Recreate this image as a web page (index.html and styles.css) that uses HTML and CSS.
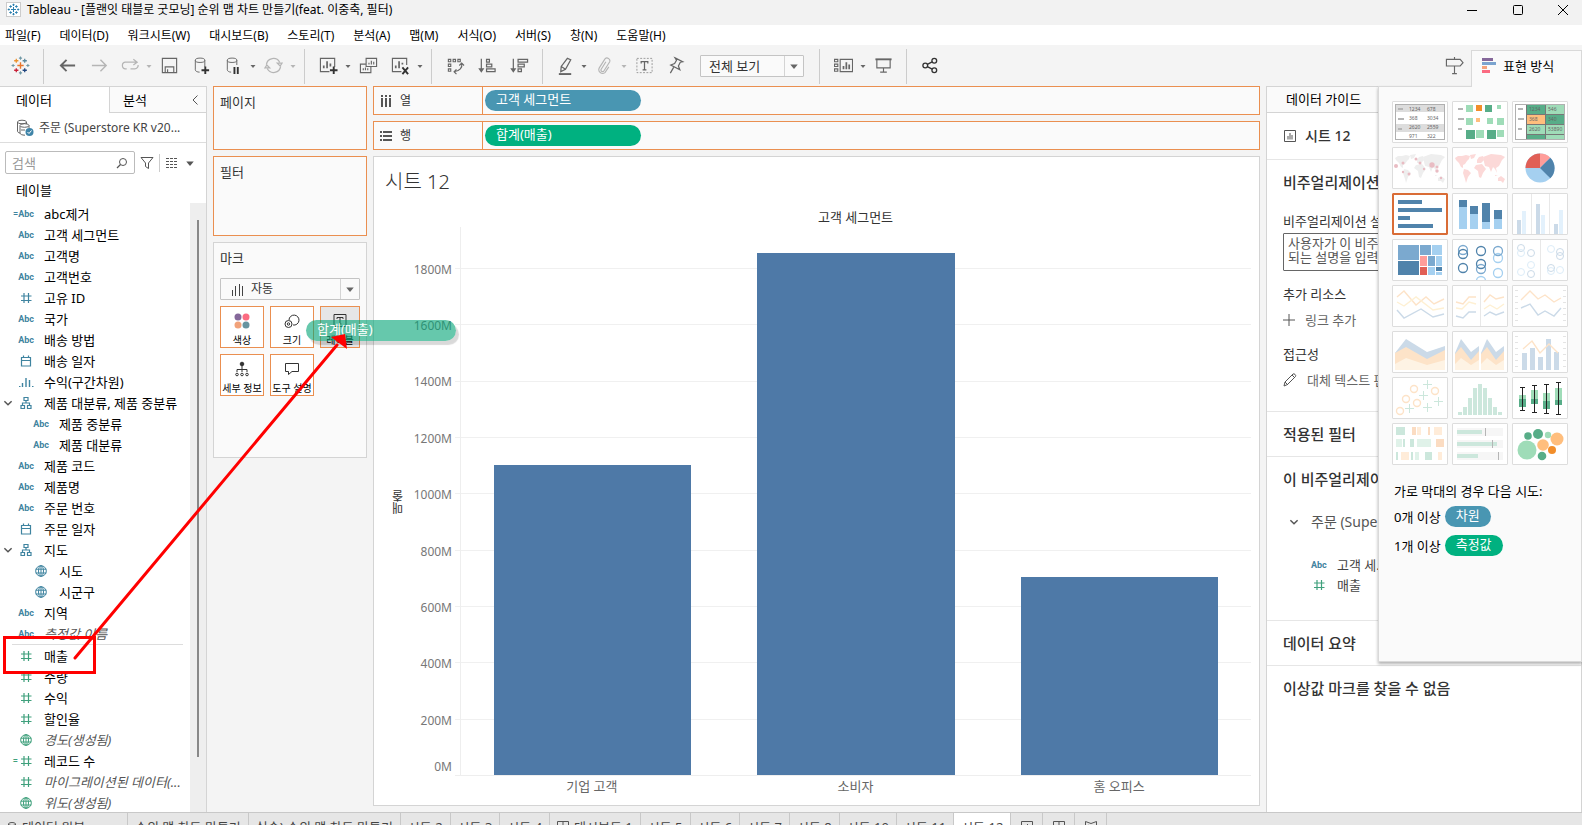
FILE: index.html
```html
<!DOCTYPE html>
<html lang="ko">
<head>
    <meta charset="UTF-8">
    <meta name="viewport" content="width=device-width, initial-scale=1.0">
    <title>Tableau - [플랜잇 태블로 굿모닝] 순위 맵 차트 만들기(feat. 이중축, 필터)</title>
    <link rel="stylesheet" href="styles.css">
</head>
<body>
    <!-- Shared icons -->
    <svg class="sprite" aria-hidden="true">
        <symbol id="i-hash" viewBox="0 0 16 16"><path d="M6 3v10M10.500 3v10M3 6h10.500M3 10.500h10.500" fill="none" stroke="currentColor" stroke-width="1.200"/></symbol>
        <symbol id="i-globe" viewBox="0 0 16 16"><g fill="none" stroke="currentColor"><circle cx="8" cy="8" r="5.300"/><ellipse cx="8" cy="8" rx="2.500" ry="5.300"/><path d="M2.700 6.200h10.600M2.700 10h10.600M8 2.700v10.600"/></g></symbol>
        <symbol id="i-date" viewBox="0 0 16 16"><path d="M3.500 4.500h9v8.500h-9zM3.500 7.500h9M5.500 2.500v2M10.500 2.500v2" fill="none" stroke="currentColor" stroke-width="1.200"/></symbol>
        <symbol id="i-hier" viewBox="0 0 16 16"><path d="M6 2.500h4v3H6zM3 10.500h3.500v3H3zM9.500 10.500H13v3H9.500zM8 5.500V8M4.500 10.500V8h7v2.500" fill="none" stroke="currentColor" stroke-width="1.200"/></symbol>
        <symbol id="i-bins" viewBox="0 0 16 16"><path d="M4.500 13V9M8 13V4M11.500 13V6" stroke="currentColor" stroke-width="1.400"/><path d="M1 12.500h1.500M14 12.500h1.500" stroke="currentColor"/></symbol>
        <symbol id="i-caret" viewBox="0 0 8 8"><path d="M1.500 3h5L4 6z" fill="currentColor"/></symbol>
        <symbol id="i-down" viewBox="0 0 10 10"><path d="M2 3.500l3 3 3-3" fill="none" stroke="currentColor" stroke-width="1.200"/></symbol>
        <symbol id="i-logo" viewBox="0 0 18 18">
            <path d="M9 6v6M6 9h6" stroke="#e8762c" stroke-width="1.300"/>
            <path d="M5 2.500v4M3 4.500h4" stroke="#eb912c" stroke-width="1.200"/>
            <path d="M13 2.500v4M11 4.500h4" stroke="#59879b" stroke-width="1.200"/>
            <path d="M5 11.500v4M3 13.500h4" stroke="#c72037" stroke-width="1.200"/>
            <path d="M13 11.500v4M11 13.500h4" stroke="#1f447e" stroke-width="1.200"/>
            <path d="M9 .5v3M7.500 2h3M9 14.500v3M7.500 16h3M2 7.500v3M.5 9h3M16 7.500v3M14.500 9h3" stroke="#7099a6"/>
        </symbol>
        <symbol id="i-logo-blue" viewBox="0 0 18 18">
            <path d="M9 5.500v7M5.500 9h7M5 3v3.500M3.200 4.800h3.600M13 3v3.500M11.200 4.800h3.600M5 11.500V15M3.200 13.200h3.600M13 11.500V15M11.200 13.200h3.600M9 1v3M7.500 2.500h3M9 14v3M7.500 15.500h3M2.500 7.500v3M1 9h3M15.500 7.500v3M14 9h3" stroke="#2b7fae" stroke-width="1.400"/>
        </symbol>
        <symbol id="world" viewBox="0 0 56 42">
            <path d="M3 11l3-2 4 0 4-1 4 1-1 3-2 2-2 3-2 1 0 3-2-1-2-4-3-3zM18 8l6-1-2 4-3 1zM12 22l4 1 3 3-3 4-2 6-1-4-2-6z"/>
            <path d="M25 13l2-3 4-1 1 4-3 3-4 0zM24 18l6-1 4 5-3 4-2 5-2-1-1-6-4-3z"/>
            <path d="M31 10l8-3 10 1 4 2-3 3-3 6-3 2 1 5-2-4-2-2-2 5-2-5-4-1-1-4zM43 28l3 1-3 0zM46 31l3-2 4 3-2 4-2-2-3 0z"/>
        </symbol>
    </svg>

    <header class="titlebar">
        <svg class="app-icon"><use href="#i-logo-blue"/></svg>
        <span class="title">Tableau - [플랜잇 태블로 굿모닝] 순위 맵 차트 만들기(feat. 이중축, 필터)</span>
        <div class="window-buttons">
            <button aria-label="최소화"><svg width="12" height="12"><path d="M1 6.500h10" stroke="#000"/></svg></button>
            <button aria-label="최대화"><svg width="12" height="12"><rect x="1.500" y="1.500" width="9" height="9" rx="1" fill="none" stroke="#000"/></svg></button>
            <button aria-label="닫기"><svg width="12" height="12"><path d="M1 1l10 10M11 1L1 11" stroke="#000"/></svg></button>
        </div>
    </header>

    <nav class="menubar">
        <button>파일(F)</button>
        <button>데이터(D)</button>
        <button>워크시트(W)</button>
        <button>대시보드(B)</button>
        <button>스토리(T)</button>
        <button>분석(A)</button>
        <button>맵(M)</button>
        <button>서식(O)</button>
        <button>서버(S)</button>
        <button>창(N)</button>
        <button>도움말(H)</button>
    </nav>

    <div class="toolbar">
        <button class="tool" aria-label="시작 페이지"><svg viewBox="0 0 18 18"><use href="#i-logo"/></svg></button>
        <span class="sep"></span>
        <button class="tool" aria-label="실행 취소"><svg viewBox="0 0 20 20"><path d="M18 10H3M9 4l-6 6 6 6" stroke-width="2"/></svg></button>
        <button class="tool off" aria-label="다시 실행"><svg viewBox="0 0 20 20"><path d="M2 10h15M11 4l6 6-6 6" stroke-width="1.500"/></svg></button>
        <button class="tool narrow off" aria-label="재생"><svg viewBox="0 0 20 20"><path d="M6 13.500H4.500a3 3 0 0 1-3-3v-1a3 3 0 0 1 3-3H16M13 3.500l4 3-4 3M10 13.500h4.500a3.500 3.500 0 0 0 3.500-4" stroke-width="1.300"/></svg></button>
        <svg class="caret off"><use href="#i-caret"/></svg>
        <button class="tool" aria-label="저장"><svg viewBox="0 0 20 20"><path d="M2.500 2.500h15v15h-15zM5.500 17.500v-6h9v6M8 17v-3" stroke-width="1.200"/></svg></button>
        <button class="tool" aria-label="새 데이터 원본"><svg viewBox="0 0 20 20"><path d="M3.500 4.500v10c0 1.500 2 2.500 4.500 2.500M13.500 4.500v7"/><ellipse cx="8.500" cy="4.500" rx="5" ry="2.300"/><path d="M14 11v8M10 15h8" stroke="#333" stroke-width="2"/></svg></button>
        <button class="tool" aria-label="자동 업데이트 일시 중지"><svg viewBox="0 0 20 20"><path d="M3.500 4.500v10c0 1.500 2 2.500 4 2.500M13.500 4.500v5"/><ellipse cx="8.500" cy="4.500" rx="5" ry="2.300"/><path d="M11 11.500V19M14.500 11.500V19" stroke="#333" stroke-width="2"/></svg></button>
        <svg class="caret"><use href="#i-caret"/></svg>
        <button class="tool off" aria-label="업데이트 실행"><svg viewBox="0 0 20 20"><path d="M2.500 9a7.500 7.500 0 0 1 14-2.500M17.500 11a7.500 7.500 0 0 1-14 2.500M14 7.500h5l-2 3zM6 12.500H1l2-3z" stroke-width="1.300"/></svg></button>
        <svg class="caret off"><use href="#i-caret"/></svg>
        <span class="sep"></span>
        <button class="tool" aria-label="새 워크시트"><svg viewBox="0 0 20 20"><path d="M11 16.500H1.500v-14h15v9" stroke-width="1.200"/><path d="M5 13v-3M8.500 13V5.500M12 11V8" stroke-width="1.800"/><path d="M15.500 11v8M11.500 15h8" stroke="#333" stroke-width="2"/></svg></button>
        <svg class="caret"><use href="#i-caret"/></svg>
        <button class="tool" aria-label="복제"><svg viewBox="0 0 20 20"><path d="M7.500 2.500h11v8.500h-11zM7.500 8.500h-6v9h11V11M10.500 9V7M13 9V5M15.500 9V6M4.500 15v-2M6.800 15v-3M9.200 15v-2" stroke-width="1.200"/></svg></button>
        <button class="tool" aria-label="지우기"><svg viewBox="0 0 20 20"><path d="M11 16.500H1.500v-14h15v7" stroke-width="1.200"/><path d="M5 13v-3M8.500 13V5.500M12 9V7" stroke-width="1.800"/><path d="M12 12l6 7M18 12l-6 7" stroke="#333" stroke-width="2"/></svg></button>
        <svg class="caret"><use href="#i-caret"/></svg>
        <span class="sep"></span>
        <button class="tool" aria-label="바꾸기"><svg viewBox="0 0 20 20"><path d="M2.500 3.500h2.500v2.500H2.500zM7.500 3.500H10v2.500H7.500zM12.500 3.500H15v2.500h-2.500zM2.500 8.500h2.500V11H2.500zM2.500 13.500h2.500V16H2.500zM16.500 8c1 4-2 8-8 8.500M14 10l2.500-2.500L19 10M11 14l-2.500 2.500L11 19" stroke-width="1.200"/></svg></button>
        <button class="tool" aria-label="오름차순 정렬"><svg viewBox="0 0 20 20"><path d="M3.500 3v13M1.500 13.500l2 3 2-3zM9 3.500h3v3H9zM9 8.500h5.500v3H9zM9 13.500h9v3H9z" stroke-width="1.300"/></svg></button>
        <button class="tool" aria-label="내림차순 정렬"><svg viewBox="0 0 20 20"><path d="M3.500 3v13M1.500 13.500l2 3 2-3zM8.500 3.500h10v3h-10zM8.500 8.500h6.500v3H8.500zM8.500 13.500H12v3H8.500z" stroke-width="1.300"/></svg></button>
        <span class="sep"></span>
        <button class="tool narrow" aria-label="하이라이트"><svg viewBox="0 0 20 20"><path d="M12 2.500l3.500 1.500-5.500 10-5 2.500.5-5.500zM5.500 11l4.500 3" stroke-width="1.300"/><path d="M3 19h13" stroke-width="2"/></svg></button>
        <svg class="caret"><use href="#i-caret"/></svg>
        <button class="tool off" aria-label="그룹"><svg viewBox="0 0 20 20"><path d="M11.500 6l-5 8a1.600 1.600 0 0 0 3 1.500l6-9.500a3 3 0 0 0-5-3l-6 9.500a4 4 0 0 0 6 5l4-6" stroke-width="1.200"/></svg></button>
        <svg class="caret off"><use href="#i-caret"/></svg>
        <button class="tool" aria-label="마크 레이블 표시"><svg viewBox="0 0 20 20"><rect x="2" y="2.500" width="16" height="15" stroke-dasharray="2 1.500" stroke="#999"/><path d="M6.500 8V6h7v2M10 6v8.500M8 14.500h4" stroke-width="1.300"/></svg></button>
        <button class="tool" aria-label="축 고정"><svg viewBox="0 0 20 20"><path d="M8.500 2l8 4-2.500.5-2 4 1.500 4-9.500-5 4-1.500 2-3.500zM7 12L3.500 18" stroke-width="1.300"/></svg></button>
        <div class="select-box fit">
            <select aria-label="맞춤"><option>전체 보기</option></select>
            <span class="arrow"><svg><use href="#i-caret"/></svg></span>
        </div>
        <span class="sep"></span>
        <button class="tool" aria-label="카드 표시/숨기기"><svg viewBox="0 0 20 20"><path d="M.5 3.500h3.500V6H.5zM.5 8.500h3.500V11H.5zM.5 13.500h3.500V16H.5zM6.500 3.500h13v13h-13z" stroke-width="1.200"/><path d="M10 14v-3.500M13 14V6.500M16 14V9" stroke-width="1.800"/></svg></button>
        <svg class="caret"><use href="#i-caret"/></svg>
        <button class="tool" aria-label="프레젠테이션 모드"><svg viewBox="0 0 20 20"><path d="M1.500 3.500h17" stroke-width="2"/><path d="M3 4v8.500h14V4M10 12.500v4.500M6.500 17h7" stroke-width="1.200"/></svg></button>
        <span class="sep"></span>
        <button class="tool" aria-label="공유"><svg viewBox="0 0 20 20"><g stroke-width="1.400" stroke="#333"><circle cx="4.500" cy="10" r="2.500"/><circle cx="14" cy="5" r="2.500"/><circle cx="14" cy="15" r="2.500"/><path d="M6.700 8.800l5-2.600M6.700 11.200l5 2.600"/></g></svg></button>
        <button class="tool guide-button" aria-label="데이터 가이드"><svg viewBox="0 0 20 20"><path d="M1.500 3.500H16l3 3.500-3 3.500H1.500zM10 1v2.500M10 10.500V19M7.500 18.500h5" stroke-width="1.200"/></svg></button>
    </div>

    <main class="workspace">
        <section class="data-pane">
            <div class="pane-tabs">
                <button class="active">데이터</button>
                <button class="second">분석<svg width="8" height="12"><path d="M6.500 1.500L2 6l4.500 4.500" fill="none" stroke="#555"/></svg></button>
            </div>
            <div class="datasource">
                <svg width="18" height="18" viewBox="0 0 18 18"><g fill="none" stroke="#666"><ellipse cx="6" cy="3" rx="4.500" ry="1.800"/><path d="M1.500 3v9c0 1 1 2 2.500 2M10.500 3v2M4 7v7c0 1.200 2 2.200 5 2.200"/><ellipse cx="8.500" cy="6.500" rx="4.500" ry="1.800"/><path d="M13 6.500V9M5 11h4"/></g><circle cx="13.500" cy="13" r="4" fill="#3f84a8"/><path d="M11.500 13l1.500 1.500 2.500-3" fill="none" stroke="#fff"/></svg>
                <span>주문 (Superstore KR v20...</span>
            </div>
            <div class="search-row">
                <label class="search">
                    <input type="text" placeholder="검색" aria-label="검색">
                    <svg width="12" height="12"><circle cx="7" cy="5" r="3.500" fill="none" stroke="#555"/><path d="M4.500 7.500L1 11" stroke="#555" stroke-width="1.300"/></svg>
                </label>
                <button aria-label="필터"><svg width="14" height="14"><path d="M1 1.500h12L8.500 7v5.500l-3-2V7z" fill="none" stroke="#555"/></svg></button>
                <span class="bar"></span>
                <button aria-label="보기"><svg width="14" height="12"><path d="M1 1.500h12M1 4.500h12M1 7.500h12M1 10.500h12" stroke="#555" stroke-dasharray="3 1"/></svg></button>
                <svg class="caret big"><use href="#i-caret"/></svg>
            </div>
            <h2>테이블</h2>
            <div class="field-area">
                <div class="field-list">
                    <ul>
                        <li><i></i><b>=Abc</b>abc제거</li>
                        <li><i></i><b>Abc</b>고객 세그먼트</li>
                        <li><i></i><b>Abc</b>고객명</li>
                        <li><i></i><b>Abc</b>고객번호</li>
                        <li><i></i><b><svg><use href="#i-hash"/></svg></b>고유 ID</li>
                        <li><i></i><b>Abc</b>국가</li>
                        <li><i></i><b>Abc</b>배송 방법</li>
                        <li><i></i><b><svg><use href="#i-date"/></svg></b>배송 일자</li>
                        <li><i></i><b><svg><use href="#i-bins"/></svg></b>수익(구간차원)</li>
                        <li><i><svg><use href="#i-down"/></svg></i><b><svg><use href="#i-hier"/></svg></b>제품 대분류, 제품 중분류</li>
                        <li class="child"><i></i><b>Abc</b>제품 중분류</li>
                        <li class="child"><i></i><b>Abc</b>제품 대분류</li>
                        <li><i></i><b>Abc</b>제품 코드</li>
                        <li><i></i><b>Abc</b>제품명</li>
                        <li><i></i><b>Abc</b>주문 번호</li>
                        <li><i></i><b><svg><use href="#i-date"/></svg></b>주문 일자</li>
                        <li><i><svg><use href="#i-down"/></svg></i><b><svg><use href="#i-hier"/></svg></b>지도</li>
                        <li class="child"><i></i><b><svg><use href="#i-globe"/></svg></b>시도</li>
                        <li class="child"><i></i><b><svg><use href="#i-globe"/></svg></b>시군구</li>
                        <li><i></i><b>Abc</b>지역</li>
                        <li class="auto"><i></i><b>Abc</b><em>측정값 이름</em></li>
                    </ul>
                    <ul class="measures">
                        <li><i></i><b><svg><use href="#i-hash"/></svg></b>매출</li>
                        <li><i></i><b><svg><use href="#i-hash"/></svg></b>수량</li>
                        <li><i></i><b><svg><use href="#i-hash"/></svg></b>수익</li>
                        <li><i></i><b><svg><use href="#i-hash"/></svg></b>할인율</li>
                        <li class="auto"><i></i><b><svg><use href="#i-globe"/></svg></b><em>경도(생성됨)</em></li>
                        <li><i></i><b>=<svg><use href="#i-hash"/></svg></b>레코드 수</li>
                        <li class="auto"><i></i><b><svg><use href="#i-hash"/></svg></b><em>마이그레이션된 데이터(...</em></li>
                        <li class="auto"><i></i><b><svg><use href="#i-globe"/></svg></b><em>위도(생성됨)</em></li>
                    </ul>
                </div>
                <div class="scrollbar"><span></span></div>
            </div>
        </section>

        <section class="cards">
            <div class="card drop pages">페이지</div>
            <div class="card drop filters">필터</div>
            <div class="card marks">
                <h3>마크</h3>
                <div class="select-box mark-type">
                    <svg width="12" height="14"><path d="M1.500 14V8M4.500 14V4M8.500 14V2M11.500 14V4" stroke="#444"/></svg>
                    <select aria-label="마크 유형"><option>자동</option></select>
                    <span class="arrow"><svg><use href="#i-caret"/></svg></span>
                </div>
                <div class="mark-grid">
                    <button><svg viewBox="0 0 18 18"><circle cx="5" cy="5" r="3.500" fill="#85689a"/><circle cx="13" cy="5" r="3.500" fill="#fb6b81"/><circle cx="5" cy="13" r="3.500" fill="#f1a27a"/><circle cx="13" cy="13" r="3.500" fill="#6794a0"/></svg>색상</button>
                    <button><svg viewBox="0 0 18 18" fill="none" stroke="#333"><path d="M6 8a5 5 0 1 1 4 5"/><circle cx="5.500" cy="12" r="3.500"/><circle cx="5.500" cy="12" r="1.200"/></svg>크기</button>
                    <button class="hover"><svg viewBox="0 0 18 18" fill="none" stroke="#333"><path d="M3 2.500h12v12H3zM6 7V5.500h6V7M9 5.500v6.500M7.500 12h3"/></svg>레이블</button>
                    <button><svg viewBox="0 0 18 18" fill="none" stroke="#333"><circle cx="9" cy="4" r="1.800" fill="#333"/><path d="M9 5v7M4 12V9.500h10V12"/><circle cx="4" cy="14.500" r="1.300"/><circle cx="9" cy="14.500" r="1.300"/><circle cx="14" cy="14.500" r="1.300"/></svg>세부 정보</button>
                    <button><svg viewBox="0 0 18 18" fill="none" stroke="#333"><path d="M2.500 3.500h13v8H9l-3.500 3v-3h-3z"/></svg>도구 설명</button>
                </div>
            </div>
        </section>

        <section class="content">
            <div class="shelf">
                <div class="shelf-name"><svg viewBox="0 0 12 12"><path d="M2 0v2M6 0v2M10 0v2M2 3v9M6 3v9M10 3v9" stroke="#555" stroke-width="2"/></svg>열</div>
                <span class="pill blue">고객 세그먼트</span>
            </div>
            <div class="shelf">
                <div class="shelf-name"><svg viewBox="0 0 12 12"><path d="M0 2h2M0 6h2M0 10h2M3 2h9M3 6h9M3 10h9" stroke="#555" stroke-width="2"/></svg>행</div>
                <span class="pill green">합계(매출)</span>
            </div>
            <div class="view">
                <h1>시트 12</h1>
                <div class="chart">
                    <div class="chart-head">고객 세그먼트</div>
                    <div class="axis-title">매출</div>
                    <div class="y-axis">
                        <span class="top"></span>
                        <span>1800M</span>
                        <span>1600M</span>
                        <span>1400M</span>
                        <span>1200M</span>
                        <span>1000M</span>
                        <span>800M</span>
                        <span>600M</span>
                        <span>400M</span>
                        <span class="last">200M<small>0M</small></span>
                    </div>
                    <div class="grid-lines">
                        <span class="top"></span><span></span><span></span><span></span><span></span><span></span><span></span><span></span><span></span><span></span>
                    </div>
                    <div class="bars">
                        <div style="height: 56.6%"></div>
                        <div style="height: 95.2%"></div>
                        <div style="height: 36.2%"></div>
                    </div>
                    <div class="x-axis">
                        <span>기업 고객</span>
                        <span>소비자</span>
                        <span>홈 오피스</span>
                    </div>
                </div>
            </div>
        </section>

        <aside class="guide">
            <div class="guide-tab">데이터 가이드</div>
            <div class="guide-sheet"><svg width="12" height="12"><path d="M.5.5h11v11H.5z" fill="none" stroke="#555"/><path d="M4 9.500V6M6 9.500V3M8 9.500V5" stroke="#aaa" stroke-width="2"/></svg>시트 12</div>
            <div class="guide-block describe">
                <h2>비주얼리제이션 세부 정보</h2>
                <label for="viz-desc">비주얼리제이션 설명</label>
                <textarea id="viz-desc" placeholder="사용자가 이 비주얼리제이션을 이해하는 데 도움이 되는 설명을 입력하십시오."></textarea>
                <h4>추가 리소스</h4>
                <a href="#"><svg width="12" height="12"><path d="M6 0v12M0 6h12" stroke="#555"/></svg>링크 추가</a>
                <h4>접근성</h4>
                <a href="#"><svg width="14" height="14"><path d="M1 13l1-4 8-8c1-.8 3.500 1 2.500 2.500l-8 8zM2 9l3 3M9 2l3 3" fill="none" stroke="#555"/></svg>대체 텍스트 편집</a>
            </div>
            <div class="guide-block"><h2>적용된 필터</h2></div>
            <div class="guide-block used">
                <h2>이 비주얼리제이션에 사용된 데이터</h2>
                <p class="source"><svg width="12" height="12"><use href="#i-down"/></svg>주문 (Superstore KR v20...</p>
                <p class="used-field"><b>Abc</b>고객 세...</p>
                <p class="used-field measure"><b><svg width="16" height="16"><use href="#i-hash"/></svg></b>매출</p>
            </div>
            <div class="guide-block"><h2>데이터 요약</h2></div>
            <div class="guide-block plain"><h2>이상값 마크를 찾을 수 없음</h2></div>
        </aside>
    </main>

    <footer class="sheet-bar">
        <div class="sheets">
            <button class="source"><svg width="10" height="12"><ellipse cx="5" cy="3" rx="3.500" ry="1.500" fill="none" stroke="#555"/><path d="M1.500 3v6c0 2 7 2 7 0V3" fill="none" stroke="#555"/></svg>데이터 원본</button>
            <button>순위 맵 차트 만들기</button>
            <button>실습) 순위 맵 차트 만들기</button>
            <button>시트 2</button>
            <button>시트 3</button>
            <button>시트 4</button>
            <button><svg width="12" height="12"><path d="M.5.5h11v11H.5zM6 .5v11M.5 6h11" fill="none" stroke="#555"/></svg>대시보드 1</button>
            <button>시트 5</button>
            <button>시트 6</button>
            <button>시트 7</button>
            <button>시트 8</button>
            <button>시트 10</button>
            <button>시트 11</button>
            <button class="active">시트 12</button>
            <button aria-label="새 워크시트"><svg width="12" height="12"><path d="M.5.5h11v11H.5zM4 9V6M6.500 9V3" fill="none" stroke="#555"/></svg></button>
            <button aria-label="새 대시보드"><svg width="12" height="12"><path d="M.5.5h11v11H.5zM6 .5v11M.5 6h11" fill="none" stroke="#555"/></svg></button>
            <button aria-label="새 스토리"><svg width="12" height="12"><path d="M.5.5l5.500 2 5.500-2v10L6 12 .5 10.500zM3 4l6 4" fill="none" stroke="#555"/></svg></button>
        </div>
    </footer>

    <!-- Show Me panel, opens over the data guide -->
    <aside class="show-me">
        <button class="show-me-tab"><svg width="14" height="16"><path d="M0 1.500h11" stroke="#85689a" stroke-width="3"/><path d="M0 5.500h14" stroke="#7ba4cf" stroke-width="3"/><path d="M0 9.500h5" stroke="#f4a27c" stroke-width="3"/><path d="M0 13.500h8" stroke="#fb6b81" stroke-width="3"/></svg>표현 방식</button>
        <div class="show-me-body">
            <div class="thumbs">
                <button aria-label="텍스트 테이블"><svg viewBox="1 1 54 40"><path d="M4 4h48v7H4zM4 23h48v8H4z" fill="#ddd"/><rect x="3.500" y="3.500" width="49" height="35" fill="none" stroke="#b0b0b0"/><path d="M6 8h5M6 18h6M6 28h4" stroke="#b5b5b5" stroke-width="2"/><g class="tiny"><text x="17" y="10">1234</text><text x="35" y="10">678</text><text x="17" y="19">368</text><text x="35" y="19">3034</text><text x="17" y="28">2620</text><text x="35" y="28">2559</text><text x="17" y="37">971</text><text x="35" y="37">322</text></g></svg></button>
                <button aria-label="히트맵"><svg viewBox="1 1 54 40"><path d="M6 8h5M6 18h6M6 28h4" stroke="#b5b5b5" stroke-width="2"/><path d="M14 4h7v7h-7zM45 4h4v4h-4zM14 17h7v7h-7zM35 17h6v6h-6zM45 17h7v7h-7zM24 29h8v8h-8zM45 29h7v7h-7z" fill="#9fdcb8"/><path d="M33 4h7v7h-7zM14 29h9v9h-9zM35 29h9v9h-9z" fill="#57ad88"/><path d="M24 4h6v6h-6z" fill="#f28e2b"/><path d="M24 17h4v4h-4z" fill="#ffbe7d"/></svg></button>
                <button aria-label="하이라이트 테이블"><svg viewBox="1 1 54 40"><path d="M14 3h39v36H14z" fill="#777"/><path d="M15 4h18v9H15zM34 14h18v9H34zM15 34h18v4H15z" fill="#57ad88"/><path d="M34 4h18v9H34zM15 24h18v9H15zM34 24h18v9H34zM34 34h18v4H34z" fill="#9fdcb8"/><path d="M15 14h18v9H15z" fill="#ffbe7d"/><rect x="3.500" y="3.500" width="49" height="35" fill="none" stroke="#b0b0b0"/><path d="M6 8h5M6 18h6M6 28h4" stroke="#b5b5b5" stroke-width="2"/><g class="tiny"><text x="17" y="10">1234</text><text x="36" y="10">546</text><text x="17" y="20">368</text><text x="36" y="20">340</text><text x="17" y="30">2620</text><text x="36" y="30">53890</text></g></svg></button>

                <button aria-label="기호 맵"><svg viewBox="1 1 54 40"><use href="#world" width="56" height="42" fill="#eeeeee"/><g fill="#e9bcc3"><circle cx="4" cy="19" r="2"/><circle cx="11" cy="16" r="1.500"/><circle cx="24" cy="12" r="1.500"/><circle cx="28" cy="16" r="1.500"/><circle cx="40" cy="18" r="2.700"/><circle cx="45" cy="20" r="1.500"/><circle cx="45" cy="24" r="1.700"/><circle cx="11" cy="25" r="1.200"/><circle cx="17" cy="27" r="1.500"/><circle cx="49" cy="31" r="1.200"/><circle cx="32" cy="22" r="1.200"/></g></svg></button>
                <button aria-label="맵"><svg viewBox="1 1 54 40"><use href="#world" width="56" height="42" fill="#fcd9d8"/></svg></button>
                <button aria-label="파이 차트"><svg viewBox="1 1 54 40"><circle cx="28" cy="21" r="14.500" fill="#a5d0f0"/><path d="M28 21V6.500A14.500 14.500 0 0 0 13.500 21z" fill="#e15f56"/><path d="M28 21V6.500a14.500 14.500 0 0 1 10.300 4.200z" fill="#ff9d9a"/><path d="M28 21l10.300-10.300a14.500 14.500 0 0 1 0 20.600z" fill="#5083ab"/></svg></button>

                <button class="selected" aria-label="가로 막대"><svg viewBox="1 1 54 40"><path d="M6 7h24v4H6zM6 15h44v4H6zM6 23h12v4H6zM6 31h35v4H6z" fill="#5083ab"/></svg></button>
                <button aria-label="누적 막대"><svg viewBox="1 1 54 40"><path d="M7 14h8v22H7zM18 21h8v15h-8zM30 29h8v7h-8zM42 26h8v10h-8z" fill="#a5d0f0"/><path d="M7 7h8v7H7zM18 13h8v8h-8zM30 10h8v19h-8zM42 17h8v9h-8z" fill="#5083ab"/></svg></button>
                <button aria-label="병렬 막대"><svg viewBox="1 1 54 40"><path d="M19.500 1v40M37.500 1v40" stroke="#e8e8e8"/><path d="M5 27h4v14H5zM24 11h4v30h-4zM42 31h4v10h-4z" fill="#cbdae8"/><path d="M10 18h4v23h-4zM29 22h4v19h-4zM47 17h4v24h-4z" fill="#e3f1fc"/></svg></button>

                <button aria-label="트리맵"><svg viewBox="1 1 54 40"><path d="M6 6h21v15H6zM28 6h11v10H28zM36 17h7v10h-7z" fill="#7ba9cf"/><path d="M6 22h21v14H6zM44 28h6v4h-6z" fill="#5083ab"/><path d="M40 6h10v10H40zM44 17h6v10h-6zM36 28h7v8h-7zM44 33h6v3h-6z" fill="#a5d0f0"/><path d="M28 17h7v10h-7z" fill="#ff9d9a"/><path d="M28 28h7v8h-7z" fill="#e15f56"/></svg></button>
                <button aria-label="원 보기"><svg viewBox="1 1 54 40" fill="none" stroke-width="1.300"><g stroke="#a5d0f0"><circle cx="29" cy="42" r="4.500"/><circle cx="46" cy="19" r="4.500"/><circle cx="46" cy="34" r="4.500"/></g><g stroke="#7ba9cf"><circle cx="11" cy="11" r="4.500"/><circle cx="46" cy="12" r="4.500"/><circle cx="29" cy="30" r="4.500"/></g><g stroke="#5083ab"><circle cx="11" cy="15" r="4.500"/><circle cx="11" cy="29" r="4.500"/><circle cx="29" cy="12" r="4.500"/><circle cx="29" cy="25" r="4.500"/></g></svg></button>
                <button aria-label="병렬 원"><svg viewBox="1 1 54 40" fill="none"><path d="M28.500 1v40" stroke="#e8e8e8"/><g stroke="#cbdae8"><circle cx="9" cy="9" r="3.500"/><circle cx="19" cy="14" r="3.500"/><circle cx="19" cy="35" r="3.500"/><circle cx="48" cy="13" r="3.500"/><circle cx="48" cy="17" r="3.500"/><circle cx="39" cy="29" r="3.500"/></g><g stroke="#dcecf8"><circle cx="9" cy="14" r="3.500"/><circle cx="9" cy="33" r="3.500"/><circle cx="19" cy="26" r="3.500"/><circle cx="39" cy="10" r="3.500"/><circle cx="39" cy="32" r="3.500"/><circle cx="48" cy="31" r="3.500"/></g></svg></button>

                <button aria-label="라인(연속형)"><svg viewBox="1 1 54 40" fill="none" stroke-width="1.400"><path d="M5 12l7-6 12 14 10-8 8 7 10-5" stroke="#fde3c8"/><path d="M5 17l7 4 12-9 17 13 11-2" stroke="#fef0d3"/><path d="M5 25l7 8 17-9 12 8 11-3" stroke="#cbdae8"/></svg></button>
                <button aria-label="라인(불연속형)"><svg viewBox="1 1 54 40" fill="none" stroke-width="1.400"><path d="M28.500 1v40" stroke="#e8e8e8" stroke-width="1"/><path d="M4 17l7 2 6-7h7M32 17l6-7 6 4 8-2" stroke="#fde3c8"/><path d="M4 23l6 1 7-7 7 2M32 24l6-4 7 4 7-5" stroke="#fef0d3"/><path d="M4 31l7 2 6-6h7M32 31l6-4 6 3 8-3" stroke="#cbdae8"/></svg></button>
                <button aria-label="이중 라인"><svg viewBox="1 1 54 40" fill="none"><path d="M4.500 5v33M52.500 5v33" stroke="#e4e4e4" stroke-width="3" stroke-dasharray="1 5"/><path d="M9 15l9-9 8 8 7-4 9 7 7-4" stroke="#fde3c8" stroke-width="1.400"/><path d="M9 23l9-4 8 11 7-4 9 5 7-8" stroke="#cbdae8" stroke-width="1.400"/></svg></button>

                <button aria-label="영역 차트(연속형)"><svg viewBox="1 1 54 40"><path d="M3 22L14 8l21 13 18-6v24H3z" fill="#cbdae8"/><path d="M3 22l11-6 21 12 18-9v20H3z" fill="#fde3c8"/><path d="M3 33l11-6 21 7 18-5v10H3z" fill="#fef3e4"/></svg></button>
                <button aria-label="영역 차트(불연속형)"><svg viewBox="1 1 54 40"><path d="M3 22L9 8l10 13 8-6v24H3zM29 22l6-14 9 13 8-6v24H29z" fill="#cbdae8"/><path d="M3 23l6-7 10 13 8-9v19H3zM29 23l6-7 9 13 8-9v19H29z" fill="#fde3c8"/><path d="M3 33l6-6 10 7 8-5v10H3zM29 33l6-6 9 7 8-5v10H29z" fill="#fef3e4"/></svg></button>
                <button aria-label="이중 조합"><svg viewBox="1 1 54 40"><path d="M4.500 5v33M52.500 5v33" stroke="#e4e4e4" stroke-width="3" stroke-dasharray="1 5"/><path d="M10 22h5v17h-5zM18 17h5v22h-5zM26 26h5v13h-5zM34 8h5v31h-5zM42 21h5v18h-5z" fill="#cbdae8"/><path d="M11 18l9-8 8 12 9-9 9 9" fill="none" stroke="#fde3c8" stroke-width="1.400"/></svg></button>

                <button aria-label="분산형 차트"><svg viewBox="1 1 54 40" fill="none"><g stroke="#fde3c8" stroke-width="1.400"><circle cx="22" cy="12" r="3.500"/><circle cx="43" cy="14" r="3.500"/><circle cx="14" cy="22" r="3.500"/><circle cx="25" cy="26" r="3.500"/><circle cx="8" cy="34" r="3.500"/></g><path d="M35.500 3v9M31 7.500h9M31.500 14v9M27 18.500h9M46.500 20v9M42 24.500h9M17.500 27v9M13 31.500h9M35.500 26v9M31 30.500h9" stroke="#cce7dc"/></svg></button>
                <button aria-label="히스토그램"><svg viewBox="1 1 54 40"><path d="M6 35h4v3H6zM11 30h4v8h-4zM16 21h4v17h-4zM21 11h4v27h-4zM26 7h4v31h-4zM31 11h4v27h-4zM36 21h4v17h-4zM41 30h4v8h-4zM46 35h4v3h-4z" fill="#cce7dc"/></svg></button>
                <button aria-label="박스 플롯"><svg viewBox="1 1 54 40"><path d="M7 18h7v4H7zM19 13h7v9h-7zM31 16h7v8h-7zM43 11h7v12h-7z" fill="#9fdcb8"/><path d="M7 22h7v8H7zM19 22h7v5h-7zM31 24h7v8h-7zM43 23h7v5h-7z" fill="#57ad88"/><path d="M10.500 10v23M8 10.500h5M8 33.500h5M22.500 8v27M20 8.500h5M20 35.500h5M34.500 7v29M32 7.500h5M32 36.500h5M46.500 5v32M44 5.500h5M44 37.500h5" stroke="#222"/></svg></button>

                <button aria-label="간트 차트"><svg viewBox="1 1 54 40"><path d="M4 4h9v8H4zM11 16h2v8h-2zM18 16h4v8h-4zM4 29h2v8H4zM19 29h2v8h-2zM33 29h7v8h-7z" fill="#cce7dc"/><path d="M4 16h6v8H4zM25 16h14v8H25zM23 29h4v8h-4z" fill="#e0f2e9"/><path d="M20 4h4v8h-4zM36 4h2v8h-2zM44 16h8v8h-8z" fill="#fbdcc2"/><path d="M25 4h4v8h-4zM42 4h8v8h-8zM9 29h8v8H9zM46 29h4v8h-4z" fill="#ffecd9"/></svg></button>
                <button aria-label="불릿 그래프"><svg viewBox="1 1 54 40"><path d="M5 5h46v8H5zM5 17h46v8H5zM5 29h46v8H5z" fill="#f6f6f6"/><path d="M5 7h25v4H5zM5 19h40v4H5zM5 31h21v4H5z" fill="#cce7dc"/><path d="M33.500 5v8M40.500 17v8M46.500 29v8" stroke="#b5b5b5"/></svg></button>
                <button aria-label="채워진 버블"><svg viewBox="1 1 54 40"><circle cx="15" cy="27" r="9.500" fill="#9fdcb8"/><circle cx="36" cy="12" r="3.200" fill="#9fdcb8"/><circle cx="16" cy="13" r="3.800" fill="#57ad88"/><circle cx="26" cy="11" r="5" fill="#57ad88"/><circle cx="30" cy="33" r="4.300" fill="#57ad88"/><circle cx="45" cy="16" r="6.500" fill="#ffbe7d"/><circle cx="31" cy="22" r="5.800" fill="#ffbe7d"/><circle cx="40" cy="27" r="4" fill="#f28e2b"/></svg></button>
            </div>
            <p>가로 막대의 경우 다음 시도:</p>
            <p class="need">0개 이상 <span class="pill blue">차원</span></p>
            <p class="need">1개 이상 <span class="pill green">측정값</span></p>
        </div>
    </aside>

    <!-- Pill being dragged onto the label mark, with the tutorial arrow -->
    <span class="pill dragging">합계(매출)</span>
    <svg class="annotation" width="360" height="680">
        <rect x="4.500" y="637.500" width="90" height="35" fill="none" stroke="#f00" stroke-width="3"/>
        <path d="M75 658L337 345" stroke="#f00" stroke-width="3" stroke-linecap="round"/>
        <path d="M345 334l-14 3 16 12z" fill="#f00"/>
    </svg>
</body>
</html>
```
FILE: styles.css
```css
* {
    box-sizing: border-box;
}

body {
    margin: 0;
    height: 100vh;
    display: flex;
    flex-direction: column;
    overflow: hidden;
    position: relative;
    background: #f4f4f4;
    color: #222;
    font-family: "Noto Sans", "Noto Sans CJK KR", sans-serif;
    font-size: 13px;
    line-height: 18px;
}

button, input, select, textarea {
    font: inherit;
    color: inherit;
    background: none;
    border: none;
    padding: 0;
    margin: 0;
}

h1, h2, h3, h4, p, ul {
    margin: 0;
    padding: 0;
    font-size: 13px;
    font-weight: normal;
}

li {
    list-style: none;
}

.sprite {
    display: none;
}

/* Window title and menu */
.titlebar {
    display: flex;
    align-items: center;
    flex: 0 0 25px;
    padding: 0 0 6px 6px;
    background: #f2f2f2;
    font-size: 12px;
    color: #000;
}

.app-icon {
    width: 15px;
    height: 15px;
    margin-right: 6px;
    background: #fff;
    border: 1px solid #ccc;
}

.window-buttons {
    display: flex;
    margin-left: auto;
}

.window-buttons button {
    display: flex;
    align-items: center;
    justify-content: center;
    width: 46px;
}

.window-buttons button:last-child {
    width: 44px;
    margin-right: -3px;
}

.menubar {
    display: flex;
    flex: 0 0 20px;
    gap: 19px;
    padding: 1px 0 0 5px;
    background: #fff;
    font-size: 12px;
    color: #000;
}

/* Toolbar */
.toolbar {
    display: flex;
    align-items: center;
    flex: 0 0 41px;
    padding-left: 4px;
    color: #666;
}

.tool {
    flex: 0 0 32px;
    height: 32px;
    display: flex;
    align-items: center;
    justify-content: center;
}

.tool svg {
    width: 19px;
    height: 19px;
    fill: none;
    stroke: currentColor;
}

.tool.narrow {
    flex-basis: 30px;
}

.off {
    color: #b5b5b5;
}

.caret {
    flex: 0 0 8px;
    height: 8px;
}

.caret.big {
    flex-basis: 12px;
    height: 12px;
    color: #555;
}

.sep {
    flex: 0 0 1px;
    align-self: stretch;
    margin: 4px 7px 2px;
    background: #ccc;
}

.select-box {
    display: flex;
    align-items: center;
    height: 22px;
    border: 1px solid #c4c4c4;
    border-radius: 1px;
    background: #fafafa;
    color: #333;
}

.select-box select {
    flex: 1;
    min-width: 0;
    padding-left: 8px;
    appearance: none;
}

.select-box .arrow {
    display: flex;
    align-items: center;
    justify-content: center;
    flex: 0 0 19px;
    align-self: stretch;
    border-left: 1px solid #d4d4d4;
    color: #666;
}

.arrow svg {
    width: 12px;
    height: 12px;
}

.fit {
    flex: 0 0 104px;
    margin: 0 8px;
}

.guide-button {
    margin-left: auto;
    margin-right: 112px;
}

/* Workspace */
.workspace {
    flex: 1;
    min-height: 0;
    display: flex;
}

.data-pane {
    flex: 0 0 207px;
    min-width: 0;
    display: flex;
    flex-direction: column;
    background: #fff;
    border-top: 1px solid #d4d4d4;
    border-right: 1px solid #d4d4d4;
    color: #000;
}

.pane-tabs {
    display: flex;
    flex: 0 0 26px;
}

.pane-tabs .active {
    flex: 0 0 109px;
    padding-left: 16px;
    text-align: left;
}

.pane-tabs .second {
    flex: 1;
    display: flex;
    align-items: center;
    justify-content: space-between;
    padding: 0 7px 0 13px;
    background: #fafafa;
    border-left: 1px solid #d4d4d4;
    border-bottom: 1px solid #d4d4d4;
}

.datasource {
    display: flex;
    align-items: center;
    gap: 5px;
    flex: 0 0 30px;
    padding-left: 16px;
    border-bottom: 1px solid #ddd;
    color: #444;
    font-size: 12px;
    white-space: nowrap;
}

.search-row {
    display: flex;
    align-items: center;
    gap: 5px;
    padding: 8px 0 0 5px;
}

.search {
    display: flex;
    align-items: center;
    flex: 0 0 130px;
    min-width: 0;
    height: 23px;
    padding: 0 6px;
    border: 1px solid #bbb;
    border-radius: 2px;
}

.search input {
    flex: 1;
    width: 100%;
    min-width: 0;
    outline: none;
}

.search svg {
    flex: none;
}

.search input::placeholder {
    color: #999;
}

.search-row button {
    display: flex;
}

.search-row .bar {
    width: 1px;
    height: 18px;
    background: #ccc;
}

.data-pane h2 {
    padding: 7px 0 4px 16px;
}

.field-area {
    flex: 1;
    min-height: 0;
    display: flex;
}

.field-list {
    flex: 1;
    min-width: 0;
    overflow: hidden;
    color: #000;
}

.field-list li {
    display: flex;
    align-items: center;
    height: 21px;
    white-space: nowrap;
}

.field-list li.child {
    padding-left: 15px;
}

.field-list i {
    display: flex;
    flex: 0 0 14px;
    min-width: 0;
    padding-left: 2px;
    color: #555;
}

.field-list i svg {
    width: 12px;
    height: 12px;
}

.field-list b {
    display: flex;
    align-items: center;
    justify-content: flex-end;
    flex: 0 0 20px;
    min-width: 0;
    margin-right: 10px;
    color: #3f84a0;
    font-family: Roboto, sans-serif;
    font-size: 9px;
}

.field-list b svg {
    width: 16px;
    height: 16px;
    flex: none;
}

.field-list .auto em {
    color: #555;
}

.measures::before {
    content: "";
    display: block;
    height: 1px;
    margin: 0 7px 0 12px;
    background: #ddd;
}

.field-list .measures b {
    color: #3fa07c;
}

.scrollbar {
    flex: 0 0 16px;
    padding: 17px 7px 55px;
    background: #eee;
    display: flex;
}

.scrollbar span {
    width: 2px;
    background: #888;
}

/* Cards */
.cards {
    flex: 0 0 154px;
    margin: 0 6px;
    display: flex;
    flex-direction: column;
    gap: 6px;
    color: #333;
}

.card {
    background: #fafafa;
    border: 1px solid #d4d4d4;
    padding: 6px;
}

.drop, .shelf {
    border: 1px solid #ea8f50;
}

.pages {
    height: 64px;
}

.filters {
    height: 80px;
}

.marks {
    height: 216px;
}

.mark-type {
    width: 140px;
    margin: 11px 0 6px;
    padding-left: 10px;
    font-size: 12px;
}

.mark-grid {
    display: grid;
    grid-template-columns: 44px 44px 40px;
    gap: 6px;
}

.mark-grid button {
    display: flex;
    flex-direction: column;
    align-items: center;
    justify-content: space-between;
    height: 42px;
    padding-top: 5px;
    border: 1px solid #ea8f50;
    background: #fff;
    color: #000;
    font-size: 10px;
    line-height: 14px;
    white-space: nowrap;
}

.mark-grid svg {
    width: 18px;
    height: 18px;
}

.mark-grid .hover {
    background: #e6e6e6;
}

/* Shelves */
.content {
    flex: 1;
    min-width: 0;
    display: flex;
    flex-direction: column;
    gap: 6px;
    padding-bottom: 6px;
}

.shelf {
    display: flex;
    align-items: center;
    flex: 0 0 29px;
    background: #fafafa;
}

.shelf-name {
    display: flex;
    align-items: center;
    align-self: stretch;
    gap: 8px;
    width: 109px;
    margin-right: 2px;
    padding-left: 6px;
    border-right: 1px solid #ea8f50;
    color: #333;
    font-size: 12px;
}

.shelf-name svg {
    width: 12px;
    height: 12px;
}

.pill {
    height: 21px;
    padding: 0 11px;
    border-radius: 11px;
    color: #fff;
    line-height: 18px;
}

.pill.blue {
    background: #4996b2;
}

.pill.green {
    background: #00b180;
}

.shelf .pill {
    width: 156px;
}

/* View */
.view {
    flex: 1;
    min-height: 0;
    display: flex;
    flex-direction: column;
    background: #fff;
    border: 1px solid #d4d4d4;
}

.view h1 {
    padding: 11px 11px 8px;
    font-size: 20px;
    font-weight: 300;
    line-height: 28px;
    color: #333;
}

.chart {
    flex: 1;
    min-height: 0;
    display: grid;
    grid-template-columns: 34px 47px 5px 1fr;
    grid-template-rows: 23px 1fr 29px;
    padding-right: 8px;
    color: #666;
}

.chart-head {
    grid-area: 1 / 4;
    text-align: center;
    line-height: 26px;
    color: #333;
}

.axis-title {
    grid-area: 2 / 1;
    align-self: center;
    justify-self: end;
    writing-mode: vertical-rl;
    transform: rotate(180deg);
    font-size: 12px;
    color: #333;
}

.y-axis, .grid-lines {
    display: flex;
    flex-direction: column;
}

.y-axis {
    grid-area: 2 / 2;
    padding-right: 3px;
    font-size: 12px;
    text-align: right;
    color: #777;
}

.y-axis span, .grid-lines span {
    flex: 1 1 0;
    min-height: 0;
}

.y-axis .top, .grid-lines .top {
    flex-grow: 0.74;
    border: none;
}

.y-axis span {
    line-height: 1px;
}

.y-axis .last {
    display: flex;
    flex-direction: column;
    justify-content: space-between;
}

.y-axis small {
    font-size: 12px;
    line-height: 18px;
}

.grid-lines {
    grid-area: 2 / 3 / 3 / 5;
    border-bottom: 1px solid #eee;
}

.grid-lines span {
    border-top: 1px solid #f0f0f0;
}

.bars {
    grid-area: 2 / 4;
    display: flex;
    align-items: flex-end;
    justify-content: space-around;
    border-left: 1px solid #eee;
    padding-bottom: 1px;
    z-index: 1;
}

.bars div {
    width: 25%;
    background: #4e79a7;
}

.x-axis {
    grid-area: 3 / 4;
    display: grid;
    grid-template-columns: repeat(3, 1fr);
    text-align: center;
    line-height: 20px;
}

/* Data guide */
.guide {
    flex: 0 0 316px;
    margin-left: 6px;
    background: #fff;
    border: 1px solid #d4d4d4;
    border-bottom: none;
    overflow: hidden;
    color: #333;
}

.guide-tab {
    height: 26px;
    padding: 3px 19px;
    background: #fafafa;
    border-bottom: 1px solid #d4d4d4;
    color: #000;
}

.guide-sheet {
    display: flex;
    align-items: center;
    gap: 9px;
    height: 47px;
    padding-left: 17px;
    border-bottom: 1px solid #e6e6e6;
    font-size: 14px;
    font-weight: 500;
}

.guide-block {
    padding: 12px 16px;
    border-bottom: 1px solid #e6e6e6;
}

.guide-block h2 {
    font-size: 15px;
    font-weight: 500;
    line-height: 20px;
}

.guide-block.plain {
    border: none;
}

.describe label {
    display: block;
    margin-top: 20px;
}

.describe textarea {
    display: block;
    width: 100%;
    height: 38px;
    margin: 3px 0 14px;
    padding: 2px 4px;
    border: 1px solid #666;
    border-radius: 1px;
    resize: none;
    overflow: hidden;
    line-height: 14px;
}

.describe textarea::placeholder {
    color: #555;
}

.describe a {
    display: flex;
    align-items: center;
    gap: 10px;
    margin: 8px 0 16px;
    color: #666;
    text-decoration: none;
}

.describe {
    padding-bottom: 6px;
}

.used {
    padding-bottom: 25px;
}

.source {
    display: flex;
    align-items: center;
    gap: 11px;
    color: #555;
}

.used .source {
    margin: 24px 0 24px 5px;
    font-size: 14px;
}

.used-field {
    display: flex;
    align-items: center;
    height: 20px;
    padding-left: 28px;
    color: #444;
}

.used-field b {
    display: flex;
    width: 26px;
    color: #3f84a0;
    font-family: Roboto, sans-serif;
    font-size: 9px;
}

.used-field.measure b {
    color: #3fa07c;
}

/* Sheet tabs */
.sheet-bar {
    flex: 0 0 13px;
    overflow: hidden;
    background: #e6e6e6;
    border-top: 1px solid #c8c8c8;
}

.sheets {
    display: flex;
    height: 28px;
}

.sheets button {
    display: flex;
    align-items: center;
    justify-content: center;
    gap: 5px;
    min-width: 48px;
    padding: 0 7px;
    border-right: 1px solid #c8c8c8;
    color: #444;
    white-space: nowrap;
}

.sheets button[aria-label] {
    min-width: 32px;
}

.sheets .source {
    width: 128px;
    justify-content: flex-start;
}

.sheets .active {
    background: #fff;
}

/* Show Me */
.show-me {
    position: absolute;
    top: 50px;
    right: 0;
    width: 204px;
    display: flex;
    flex-direction: column;
    align-items: flex-end;
    color: #000;
    z-index: 2;
}

.show-me-tab {
    position: relative;
    display: flex;
    align-items: center;
    gap: 7px;
    width: 111px;
    height: 37px;
    margin-bottom: -1px;
    padding: 0 0 6px 10px;
    background: #fafafa;
    border: 1px solid #d9d9d9;
    border-bottom: none;
    z-index: 1;
}

.show-me-body {
    width: 100%;
    padding: 14px 13px 97px;
    background: #fafafa;
    border: 1px solid #d9d9d9;
    box-shadow: 0 2px 3px rgba(0, 0, 0, 0.3);
}

.show-me-body p {
    padding-left: 2px;
}

.thumbs {
    display: grid;
    grid-template-columns: repeat(3, 56px);
    gap: 4px;
    margin-bottom: 17px;
}

.thumbs button {
    display: flex;
    height: 42px;
    background: #fff;
    border: 1px solid #ddd;
    border-radius: 1px;
}

.thumbs svg {
    width: 54px;
    height: 40px;
}

.thumbs .selected {
    outline: 1px solid #d96c36;
    outline-offset: -2px;
    border-color: #d96c36;
}

.tiny {
    font-size: 5px;
    fill: #666;
}

.need {
    display: flex;
    align-items: center;
    gap: 4px;
    margin: 6px 0 8px;
}

/* Drag feedback */
.dragging {
    position: absolute;
    left: 306px;
    top: 320px;
    width: 150px;
    background: rgba(0, 163, 116, 0.6);
    box-shadow: 3px 4px 1px rgba(0, 0, 0, 0.15);
    z-index: 3;
}

.annotation {
    position: absolute;
    left: 0;
    top: 0;
    pointer-events: none;
    z-index: 4;
}
```
